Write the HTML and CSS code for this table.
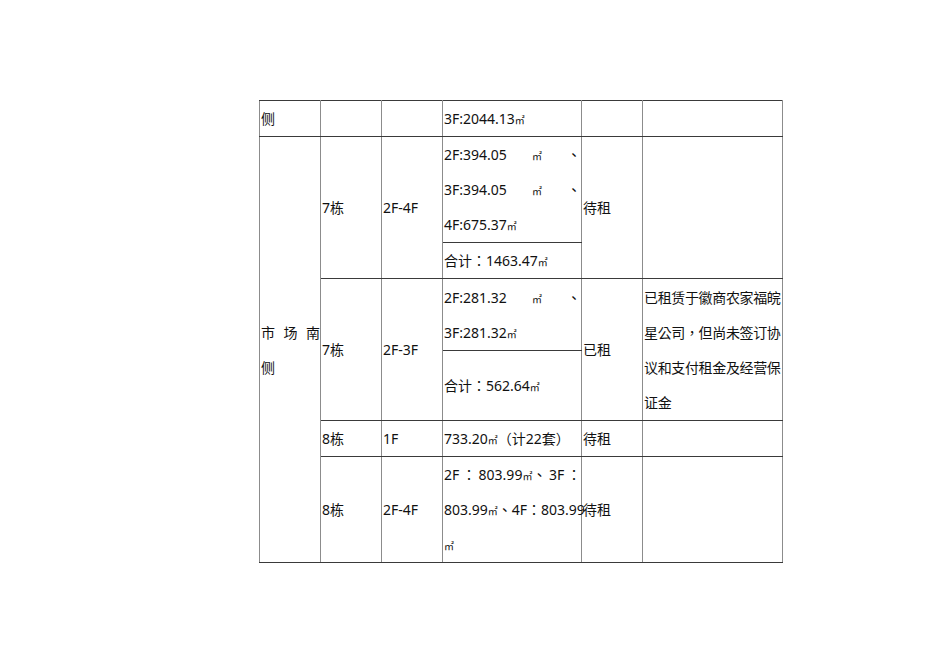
FILE: index.html
```html
<!DOCTYPE html>
<html lang="zh-Hant">
<head>
<meta charset="utf-8">
<link rel="stylesheet" href="styles.css">
</head>
<body>
<table class="sheet">
  <colgroup>
    <col class="c61"><col class="c61"><col class="c61"><col class="c139"><col class="c61"><col class="c140">
  </colgroup>
  <tr class="h36">
    <td>侧</td><td></td><td></td><td>3F:2044.13<span class="u">㎡</span></td><td></td><td></td>
  </tr>
  <tr class="h106">
    <td rowspan="7" class="side"><div class="jl"><span>市</span><span>场</span><span>南</span></div><div>侧</div></td>
    <td rowspan="2">7栋</td>
    <td rowspan="2">2F-4F</td>
    <td class="split">
      <div class="jl"><span>2F:394.05</span><span class="u">㎡</span><span>、</span></div>
      <div class="jl"><span>3F:394.05</span><span class="u">㎡</span><span>、</span></div>
      <div>4F:675.37<span class="u">㎡</span></div>
    </td>
    <td rowspan="2">待租</td>
    <td rowspan="2"></td>
  </tr>
  <tr class="h36">
    <td>合计：1463.47<span class="u">㎡</span></td>
  </tr>
  <tr class="h72">
    <td rowspan="2">7栋</td>
    <td rowspan="2">2F-3F</td>
    <td class="split">
      <div class="jl"><span>2F:281.32</span><span class="u">㎡</span><span>、</span></div>
      <div>3F:281.32<span class="u">㎡</span></div>
    </td>
    <td rowspan="2">已租</td>
    <td rowspan="2" class="remark">
      <div>已租赁于徽商农家福皖</div>
      <div>星公司，但尚未签订协</div>
      <div>议和支付租金及经营保</div>
      <div>证金</div>
    </td>
  </tr>
  <tr class="h70">
    <td>合计：562.64<span class="u">㎡</span></td>
  </tr>
  <tr class="h36">
    <td>8栋</td><td>1F</td><td>733.20<span class="u">㎡</span>（计22套）</td><td>待租</td><td></td>
  </tr>
  <tr class="h106">
    <td>8栋</td>
    <td>2F-4F</td>
    <td>
      <div class="jl"><span>2F</span><span>：</span><span>803.99<span class="u">㎡</span>、</span><span>3F</span><span>：</span></div>
      <div class="nw">803.99<span class="u">㎡</span>、4F：803.99</div>
      <div><span class="u">㎡</span></div>
    </td>
    <td>待租</td>
    <td></td>
  </tr>
</table>
</body>
</html>
```

FILE: styles.css
```css
html, body {
  margin: 0;
  padding: 0;
  background: #ffffff;
}
body {
  font-family: "Noto Sans", "Noto Sans CJK TC", sans-serif;
  font-size: 14px;
  color: #111111;
}
.sheet {
  border-collapse: collapse;
  table-layout: fixed;
  width: 524px;
  margin: 100px 0 0 259px;
}
.c61 { width: 61px; }
.c139 { width: 139px; }
.c140 { width: 140px; }
.sheet td {
  padding: 0 0 0 1px;
  border-top: 1px solid #3a3a3a;
  border-bottom: 1px solid #3a3a3a;
  border-left: 1px solid #8c8c8c;
  border-right: 1px solid #8c8c8c;
  vertical-align: middle;
  line-height: 35px;
  white-space: nowrap;
  overflow: visible;
}
.h36 { height: 36px; }
.h106 { height: 106px; }
.h72 { height: 72px; }
.h70 { height: 70px; }
.jl {
  display: flex;
  justify-content: space-between;
  align-items: baseline;
}
.jl > span {
  line-height: 35px;
}
.u {
  font-size: 10px;
  line-height: 1;
}
.jl > .u {
  line-height: 1;
}
.side {
  padding-right: 1px;
}
.remark {
  letter-spacing: -0.35px;
}
.nw { white-space: nowrap; }
```
